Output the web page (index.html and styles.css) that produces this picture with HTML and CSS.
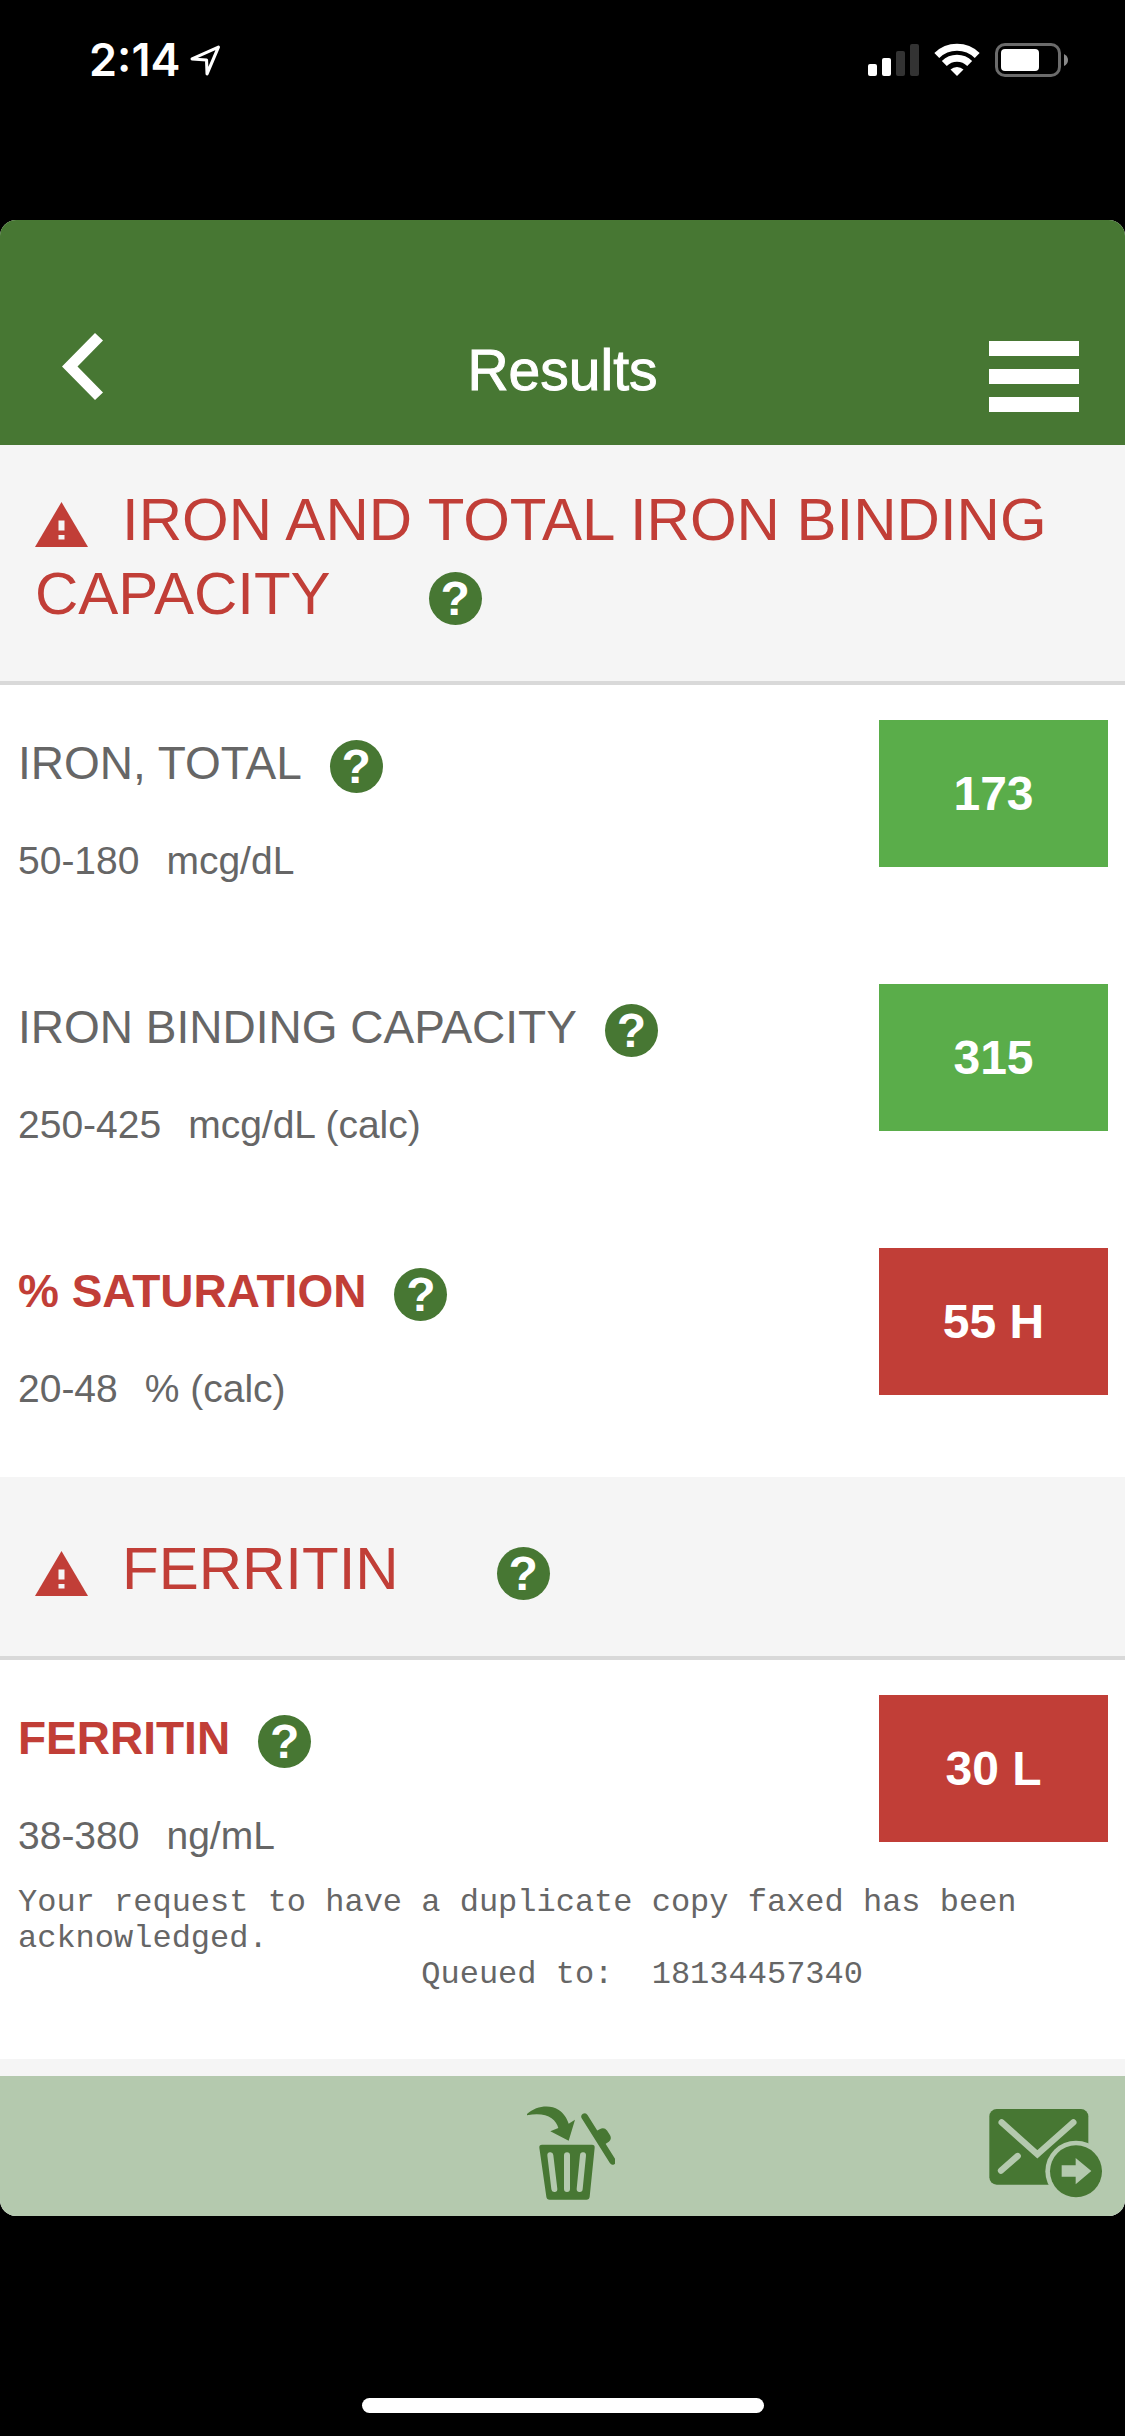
FILE: index.html
```html
<!DOCTYPE html>
<html lang="en">
<head>
  <meta charset="UTF-8" />
  <meta name="viewport" content="width=device-width, initial-scale=1.0" />
  <title>Results</title>
  <link rel="stylesheet" href="styles.css">
</head>
<body>
  <div class="status-bar">
    <div class="status-left">
      <span class="time">2:14</span>
      <svg class="location" width="31" height="31" viewBox="0 0 30 30" aria-hidden="true">
        <path d="M2 13.500 L27.500 2 L16.500 28 L16 14.500 Z" fill="none" stroke="#fff" stroke-width="3" stroke-linejoin="round" />
      </svg>
    </div>
    <div class="status-right">
      <svg width="51" height="34" viewBox="0 0 51 34" aria-hidden="true">
        <rect x="0" y="21" width="9" height="12" rx="2" fill="#fff" />
        <rect x="14" y="15" width="9" height="18" rx="2" fill="#fff" />
        <rect x="28" y="8" width="9" height="25" rx="2" fill="#333" />
        <rect x="42" y="1" width="9" height="32" rx="2" fill="#333" />
      </svg>
      <svg width="46" height="34" viewBox="0 0 46 34" aria-hidden="true">
        <path d="M2.800 12.500 A29 29 0 0 1 43.200 12.500" fill="none" stroke="#fff" stroke-width="7" />
        <path d="M10.300 20.500 A18 18 0 0 1 35.700 20.500" fill="none" stroke="#fff" stroke-width="7" />
        <path d="M23 33 L16.500 26.500 A9.500 9.500 0 0 1 29.500 26.500 Z" fill="#fff" />
      </svg>
      <svg width="73" height="34" viewBox="0 0 73 34" aria-hidden="true">
        <rect x="1.500" y="1.500" width="63" height="31" rx="8.500" fill="none" stroke="#6b6b6b" stroke-width="3" />
        <rect x="6" y="6" width="38" height="22" rx="4" fill="#fff" />
        <path d="M69 11 Q73 13 73 17 Q73 21 69 23 Z" fill="#8a8a8a" />
      </svg>
    </div>
  </div>

  <div class="app">
    <header class="app-header">
      <button class="icon-button back-button" type="button" aria-label="Back">
        <svg width="41" height="67" viewBox="0 0 41 67">
          <path d="M33 0 L41 7.500 L15.500 33.500 L41 59.500 L33 67 L0 33.500 Z" fill="#fff" />
        </svg>
      </button>
      <h1>Results</h1>
      <button class="icon-button menu-button" type="button" aria-label="Menu">
        <svg width="90" height="71" viewBox="0 0 90 71">
          <path d="M0 0H90V15H0Z M0 28H90V43H0Z M0 56H90V71H0Z" fill="#fff" />
        </svg>
      </button>
    </header>

    <main class="results">
      <section>
        <h2 class="panel-title first">
          <svg class="alert" width="53" height="45" viewBox="0 0 53 45" aria-hidden="true">
            <path d="M26.500 0 L53 45 H0 Z" fill="#c13e37" />
            <path d="M23.500 18.500H29.500V28.500H23.500Z M23.500 33H29.500V37.500H23.500Z" fill="#f5f5f5" />
          </svg>IRON AND TOTAL IRON BINDING CAPACITY<button class="help" type="button">?</button>
        </h2>
        <div class="result">
          <div class="result-info">
            <h3>IRON, TOTAL<button class="help" type="button">?</button></h3>
            <p class="range"><span>50-180</span><span>mcg/dL</span></p>
          </div>
          <div class="value">173</div>
        </div>
        <div class="result">
          <div class="result-info">
            <h3>IRON BINDING CAPACITY<button class="help" type="button">?</button></h3>
            <p class="range"><span>250-425</span><span>mcg/dL (calc)</span></p>
          </div>
          <div class="value">315</div>
        </div>
        <div class="result abnormal">
          <div class="result-info">
            <h3>% SATURATION<button class="help" type="button">?</button></h3>
            <p class="range"><span>20-48</span><span>% (calc)</span></p>
          </div>
          <div class="value">55 H</div>
        </div>
      </section>

      <section>
        <h2 class="panel-title">
          <svg class="alert" width="53" height="45" viewBox="0 0 53 45" aria-hidden="true">
            <path d="M26.500 0 L53 45 H0 Z" fill="#c13e37" />
            <path d="M23.500 18.500H29.500V28.500H23.500Z M23.500 33H29.500V37.500H23.500Z" fill="#f5f5f5" />
          </svg>FERRITIN<button class="help" type="button">?</button>
        </h2>
        <div class="result abnormal">
          <div class="result-info">
            <h3>FERRITIN<button class="help" type="button">?</button></h3>
            <p class="range"><span>38-380</span><span>ng/mL</span></p>
          </div>
          <div class="value">30 L</div>
          <pre class="comment">Your request to have a duplicate copy faxed has been
acknowledged.
                     Queued to:  18134457340</pre>
        </div>
      </section>
    </main>

    <footer class="toolbar">
      <button class="icon-button delete-button" type="button" aria-label="Delete">
        <svg width="105" height="94" viewBox="30 81 315 282">
          <path d="M81 105 C108 80 150 76 175 92 C191 102 201 118 206 134 L225 122 L206 185 L151 157 L175 147 C168 119 137 97 81 109 Z" fill="#477733" />
          <path d="M254 113 L338 247" stroke="#477733" stroke-width="20" stroke-linecap="round" />
          <path d="M288 160 L300 153 Q312 147 319 156 L328 170 Q333 179 325 186 L310 196 Z" fill="#477733" stroke="#477733" stroke-width="5" />
          <path d="M126 197 H276 Q285 197 284 206 L269 353 Q268 362 259 362 H149 Q140 362 139 353 L118 206 Q117 197 126 197 Z" fill="#477733" />
          <path d="M151 229 L163 330 M201 229 V330 M249 229 L239 330" stroke="#b4c9ae" stroke-width="18" stroke-linecap="round" />
        </svg>
      </button>
      <button class="icon-button send-button" type="button" aria-label="Send">
        <svg width="113" height="89" viewBox="87 87 339 267">
          <rect x="88" y="87" width="297" height="227" rx="22" fill="#477733" />
          <path d="M125 127 L232 223 L340 127 M123 272 L173 228" fill="none" stroke="#b4c9ae" stroke-width="19" stroke-linecap="round" />
          <circle cx="348" cy="274" r="92" fill="#b4c9ae" />
          <circle cx="348" cy="274" r="78" fill="#477733" />
          <path d="M305 256 H347 V234 L394 273 L347 313 V290 H305 Z" fill="#b4c9ae" />
        </svg>
      </button>
    </footer>
  </div>

  <div class="home-area">
    <div class="home-indicator"></div>
  </div>
</body>
</html>
```
FILE: styles.css
```css
* {
  box-sizing: border-box;
}

body {
  margin: 0;
  min-height: 100vh;
  display: flex;
  flex-direction: column;
  background: #000;
  color: #666;
  font-family: "Liberation Sans", Arial, sans-serif;
}

h1, h2, h3, p, pre {
  margin: 0;
  font-weight: normal;
}

button {
  border: none;
  padding: 0;
  cursor: pointer;
}

svg {
  display: block;
}

/* Phone status bar */
.status-bar {
  height: 220px;
  padding: 33px 57px 0 89px;
  display: flex;
  justify-content: space-between;
  align-items: flex-start;
}

.status-left,
.status-right {
  height: 54px;
  display: flex;
  align-items: center;
}

.status-left {
  gap: 10px;
}

.status-right {
  gap: 15px;
}

.time {
  color: #fff;
  font-family: Inter, sans-serif;
  font-size: 45px;
  font-weight: 600;
  line-height: 54px;
}

/* App window */
.app {
  flex: 1;
  display: flex;
  flex-direction: column;
  background: #f5f5f5;
  border-radius: 16px;
  overflow: hidden;
}

.app-header {
  height: 225px;
  padding: 75px 46px 0;
  display: grid;
  grid-template-columns: 1fr auto 1fr;
  align-items: center;
  background: #477733;
}

.app-header h1 {
  color: #fff;
  font-size: 57px;
  line-height: 64px;
  -webkit-text-stroke: 1px #fff;
}

.icon-button {
  background: transparent;
}

.back-button {
  justify-self: start;
  margin-left: 16px;
  margin-bottom: 8px;
}

.menu-button {
  justify-self: end;
  margin-top: 12px;
}

.results {
  flex: 1;
}

.panel-title {
  padding: 55px 35px 50px;
  border-bottom: 4px solid #d9d9d9;
  color: #c13e37;
  font-size: 60px;
  line-height: 74px;
}

.panel-title.first {
  padding-top: 38px;
}

.alert {
  display: inline-block;
  margin-right: 34px;
  vertical-align: -7px;
}

.help {
  width: 53px;
  height: 53px;
  border-radius: 50%;
  background: #477733;
  color: #fff;
  font-family: "Liberation Sans", Arial, sans-serif;
  font-size: 48px;
  font-weight: bold;
  line-height: 53px;
}

.panel-title .help {
  margin-left: 98px;
  vertical-align: -1px;
}

.result {
  padding: 35px 17px 66px 18px;
  display: grid;
  grid-template-columns: 1fr 229px;
  align-items: start;
  background: #fff;
}

.result-info {
  padding-top: 17px;
}

.result h3 {
  font-size: 46px;
  line-height: 53px;
}

.result h3 .help {
  margin-left: 28px;
  vertical-align: -4px;
}

.range {
  margin-top: 45px;
  display: flex;
  gap: 27px;
  font-size: 39px;
  line-height: 45px;
}

.value {
  height: 147px;
  display: flex;
  align-items: center;
  justify-content: center;
  background: #5aad4a;
  color: #fff;
  font-size: 48px;
  font-weight: bold;
}

.abnormal h3 {
  color: #c13e37;
  font-weight: bold;
}

.abnormal .value {
  background: #c13e37;
}

.comment {
  grid-column: 1 / -1;
  margin-top: 27px;
  font-family: "Liberation Mono", "Courier New", monospace;
  font-size: 32px;
  line-height: 36px;
  white-space: pre-wrap;
}

.toolbar {
  height: 140px;
  padding: 14px 23px 0;
  display: grid;
  grid-template-columns: 1fr auto 1fr;
  align-items: center;
  background: #b4c9ae;
}

.delete-button {
  grid-column: 2;
}

.send-button {
  justify-self: end;
}

.home-area {
  height: 220px;
  padding-bottom: 23px;
  display: flex;
  align-items: flex-end;
  justify-content: center;
}

.home-indicator {
  width: 402px;
  height: 15px;
  border-radius: 8px;
  background: #fff;
}
```
